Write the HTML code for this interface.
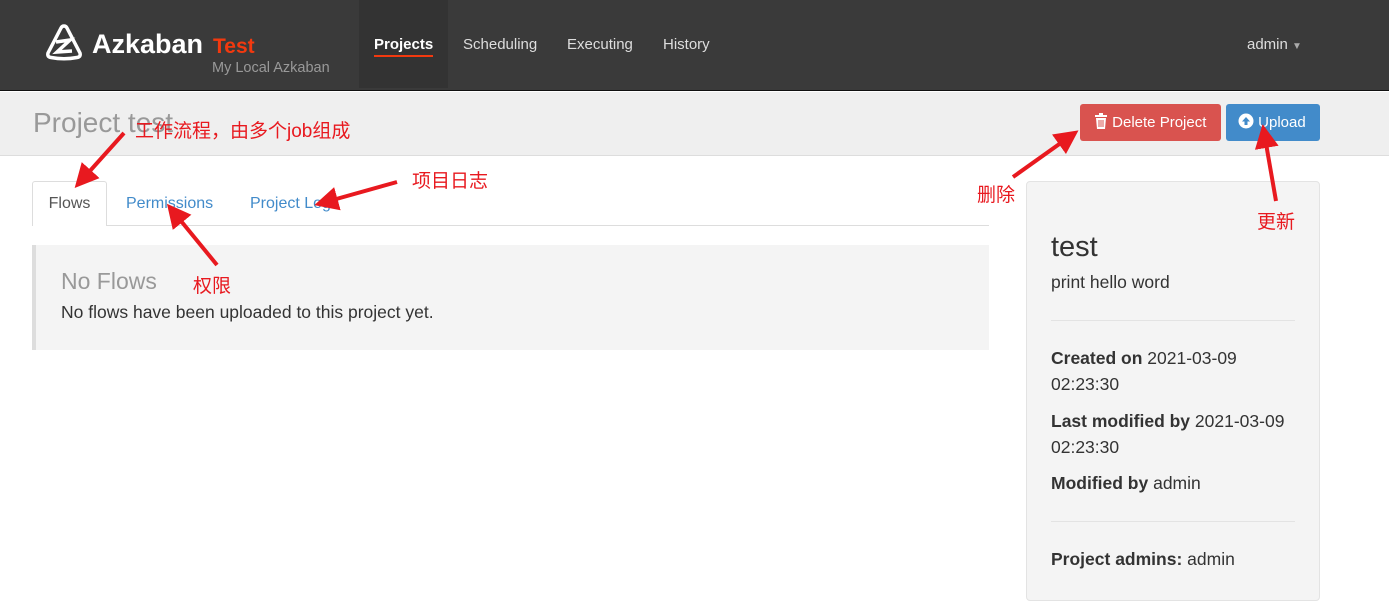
<!DOCTYPE html>
<html><head><meta charset="utf-8"><style>
*{box-sizing:border-box;margin:0;padding:0}
body{width:1389px;height:584px;overflow:hidden;background:#fff;font-family:"Liberation Sans","Noto Sans CJK SC",sans-serif;position:relative;color:#333}
.nav{position:absolute;left:0;top:0;width:1389px;height:91px;background:#3a3a3a;border-bottom:1px solid #111}
.abs{position:absolute;white-space:nowrap}
.hdr{position:absolute;left:0;top:92px;width:1389px;height:64px;background:#efefef;border-bottom:1px solid #ddd}
.cn{color:#e8191f;font-size:19px;position:absolute;white-space:nowrap}
.sb{font-size:17.5px}
</style></head><body>
<div class="nav">
 <svg class="abs" style="left:44px;top:22px" width="40" height="40" viewBox="0 0 40 40"><path d="M20 4 Q22 4 23 6 L36 31 Q37 35 33 35.5 Q20 38 7 35.5 Q3 35 4 31 L17 6 Q18 4 20 4 Z" fill="none" stroke="#fff" stroke-width="3.5" stroke-linejoin="round"/><path d="M12 20 L26 18 L13 30 L28 29" fill="none" stroke="#fff" stroke-width="3.5"/></svg>
 <div class="abs" style="left:92px;top:29px;font-size:27px;font-weight:bold;color:#fff">Azkaban</div>
 <div class="abs" style="left:213px;top:35px;font-size:21px;font-weight:bold;color:#f2390f">Test</div>
 <div class="abs" style="left:212px;top:60px;font-size:14.5px;color:#999">My Local Azkaban</div>
 <div class="abs" style="left:359px;top:0;width:89px;height:88px;background:#333"></div>
 <div class="abs" style="left:374px;top:36px;font-size:15px;font-weight:bold;color:#fff">Projects</div>
 <div class="abs" style="left:374px;top:55px;width:59px;height:2px;background:#f2390f"></div>
 <div class="abs" style="left:463px;top:36px;font-size:15px;color:#ddd">Scheduling</div>
 <div class="abs" style="left:567px;top:36px;font-size:15px;color:#ddd">Executing</div>
 <div class="abs" style="left:663px;top:36px;font-size:15px;color:#ddd">History</div>
 <div class="abs" style="left:1247px;top:36px;font-size:15px;color:#ddd">admin <span style="font-size:10px;color:#aaa">▼</span></div>
</div>
<div class="hdr">
 <div class="abs" style="left:33px;top:15px;font-size:28px;color:#999">Project test</div>
 <div class="abs" style="left:1080px;top:12px;width:141px;height:37px;background:#d9534f;border-radius:3px;color:#fff;font-size:15px;line-height:37px;padding-left:14px"><svg width="14" height="16" viewBox="0 0 14 16" style="vertical-align:-2px"><rect x="1" y="2" width="12" height="2" fill="#fff"/><rect x="5" y="0" width="4" height="2" fill="#fff"/><path d="M2 5 H12 L11 16 H3 Z" fill="#fff"/><path d="M5 7 V14 M7 7 V14 M9 7 V14" stroke="#d9534f" stroke-width="1"/></svg> Delete Project</div>
 <div class="abs" style="left:1226px;top:12px;width:94px;height:37px;background:#428bca;border-radius:3px;color:#fff;font-size:15px;line-height:37px;padding-left:12px"><svg width="16" height="16" viewBox="0 0 16 16" style="vertical-align:-2px"><circle cx="8" cy="8" r="7.5" fill="#fff"/><path d="M8 4 L12 8.5 H9.5 V12 H6.5 V8.5 H4 Z" fill="#428bca"/></svg> Upload</div>
</div>
<div class="abs" style="left:32px;top:225px;width:957px;height:1px;background:#ddd"></div>
<div class="abs" style="left:32px;top:181px;width:75px;height:45px;background:#fff;border:1px solid #ddd;border-bottom:none;border-radius:3px 3px 0 0;font-size:16px;line-height:44px;text-align:center;color:#555">Flows</div>
<div class="abs" style="left:126px;top:195px;font-size:16px;color:#428bca">Permissions</div>
<div class="abs" style="left:250px;top:195px;font-size:16px;color:#428bca">Project Logs</div>
<div class="abs" style="left:32px;top:245px;width:957px;height:105px;background:#f4f4f4;border-left:4px solid #ddd"></div>
<div class="abs" style="left:61px;top:268px;font-size:23px;color:#999">No Flows</div>
<div class="abs" style="left:61px;top:302px;font-size:17.5px;color:#333">No flows have been uploaded to this project yet.</div>
<div class="abs" style="left:1026px;top:181px;width:294px;height:420px;background:#f4f4f4;border:1px solid #e3e3e3;border-radius:4px"></div>
<div class="abs" style="left:1051px;top:231px;font-size:29px;color:#333">test</div>
<div class="abs sb" style="left:1051px;top:272px">print hello word</div>
<div class="abs" style="left:1051px;top:320px;width:244px;height:1px;background:#e3e3e3"></div>
<div class="abs sb" style="left:1051px;top:345px;line-height:26px"><b>Created on</b> 2021-03-09<br>02:23:30</div>
<div class="abs sb" style="left:1051px;top:408px;line-height:26px"><b>Last modified by</b> 2021-03-09<br>02:23:30</div>
<div class="abs sb" style="left:1051px;top:473px"><b>Modified by</b> admin</div>
<div class="abs" style="left:1051px;top:521px;width:244px;height:1px;background:#e3e3e3"></div>
<div class="abs sb" style="left:1051px;top:549px"><b>Project admins:</b> admin</div>
<div class="cn" style="left:135px;top:116px">工作流程，由多个job组成</div>
<div class="cn" style="left:412px;top:166px">项目日志</div>
<div class="cn" style="left:193px;top:271px">权限</div>
<div class="cn" style="left:977px;top:180px">删除</div>
<div class="cn" style="left:1257px;top:207px">更新</div>
<svg class="abs" style="left:0;top:0" width="1389" height="584">
<defs><marker id="a" markerWidth="6" markerHeight="6" refX="4" refY="3" orient="auto"><path d="M0 0 L6 3 L0 6 Z" fill="#e8191f"/></marker></defs>
<g stroke="#e8191f" stroke-width="4" fill="none" marker-end="url(#a)">
<line x1="124" y1="133" x2="80" y2="182"/>
<line x1="397" y1="182" x2="322" y2="203"/>
<line x1="217" y1="265" x2="172" y2="210"/>
<line x1="1013" y1="177" x2="1072" y2="135"/>
<line x1="1276" y1="201" x2="1264" y2="132"/>
</g></svg>
</body></html>
